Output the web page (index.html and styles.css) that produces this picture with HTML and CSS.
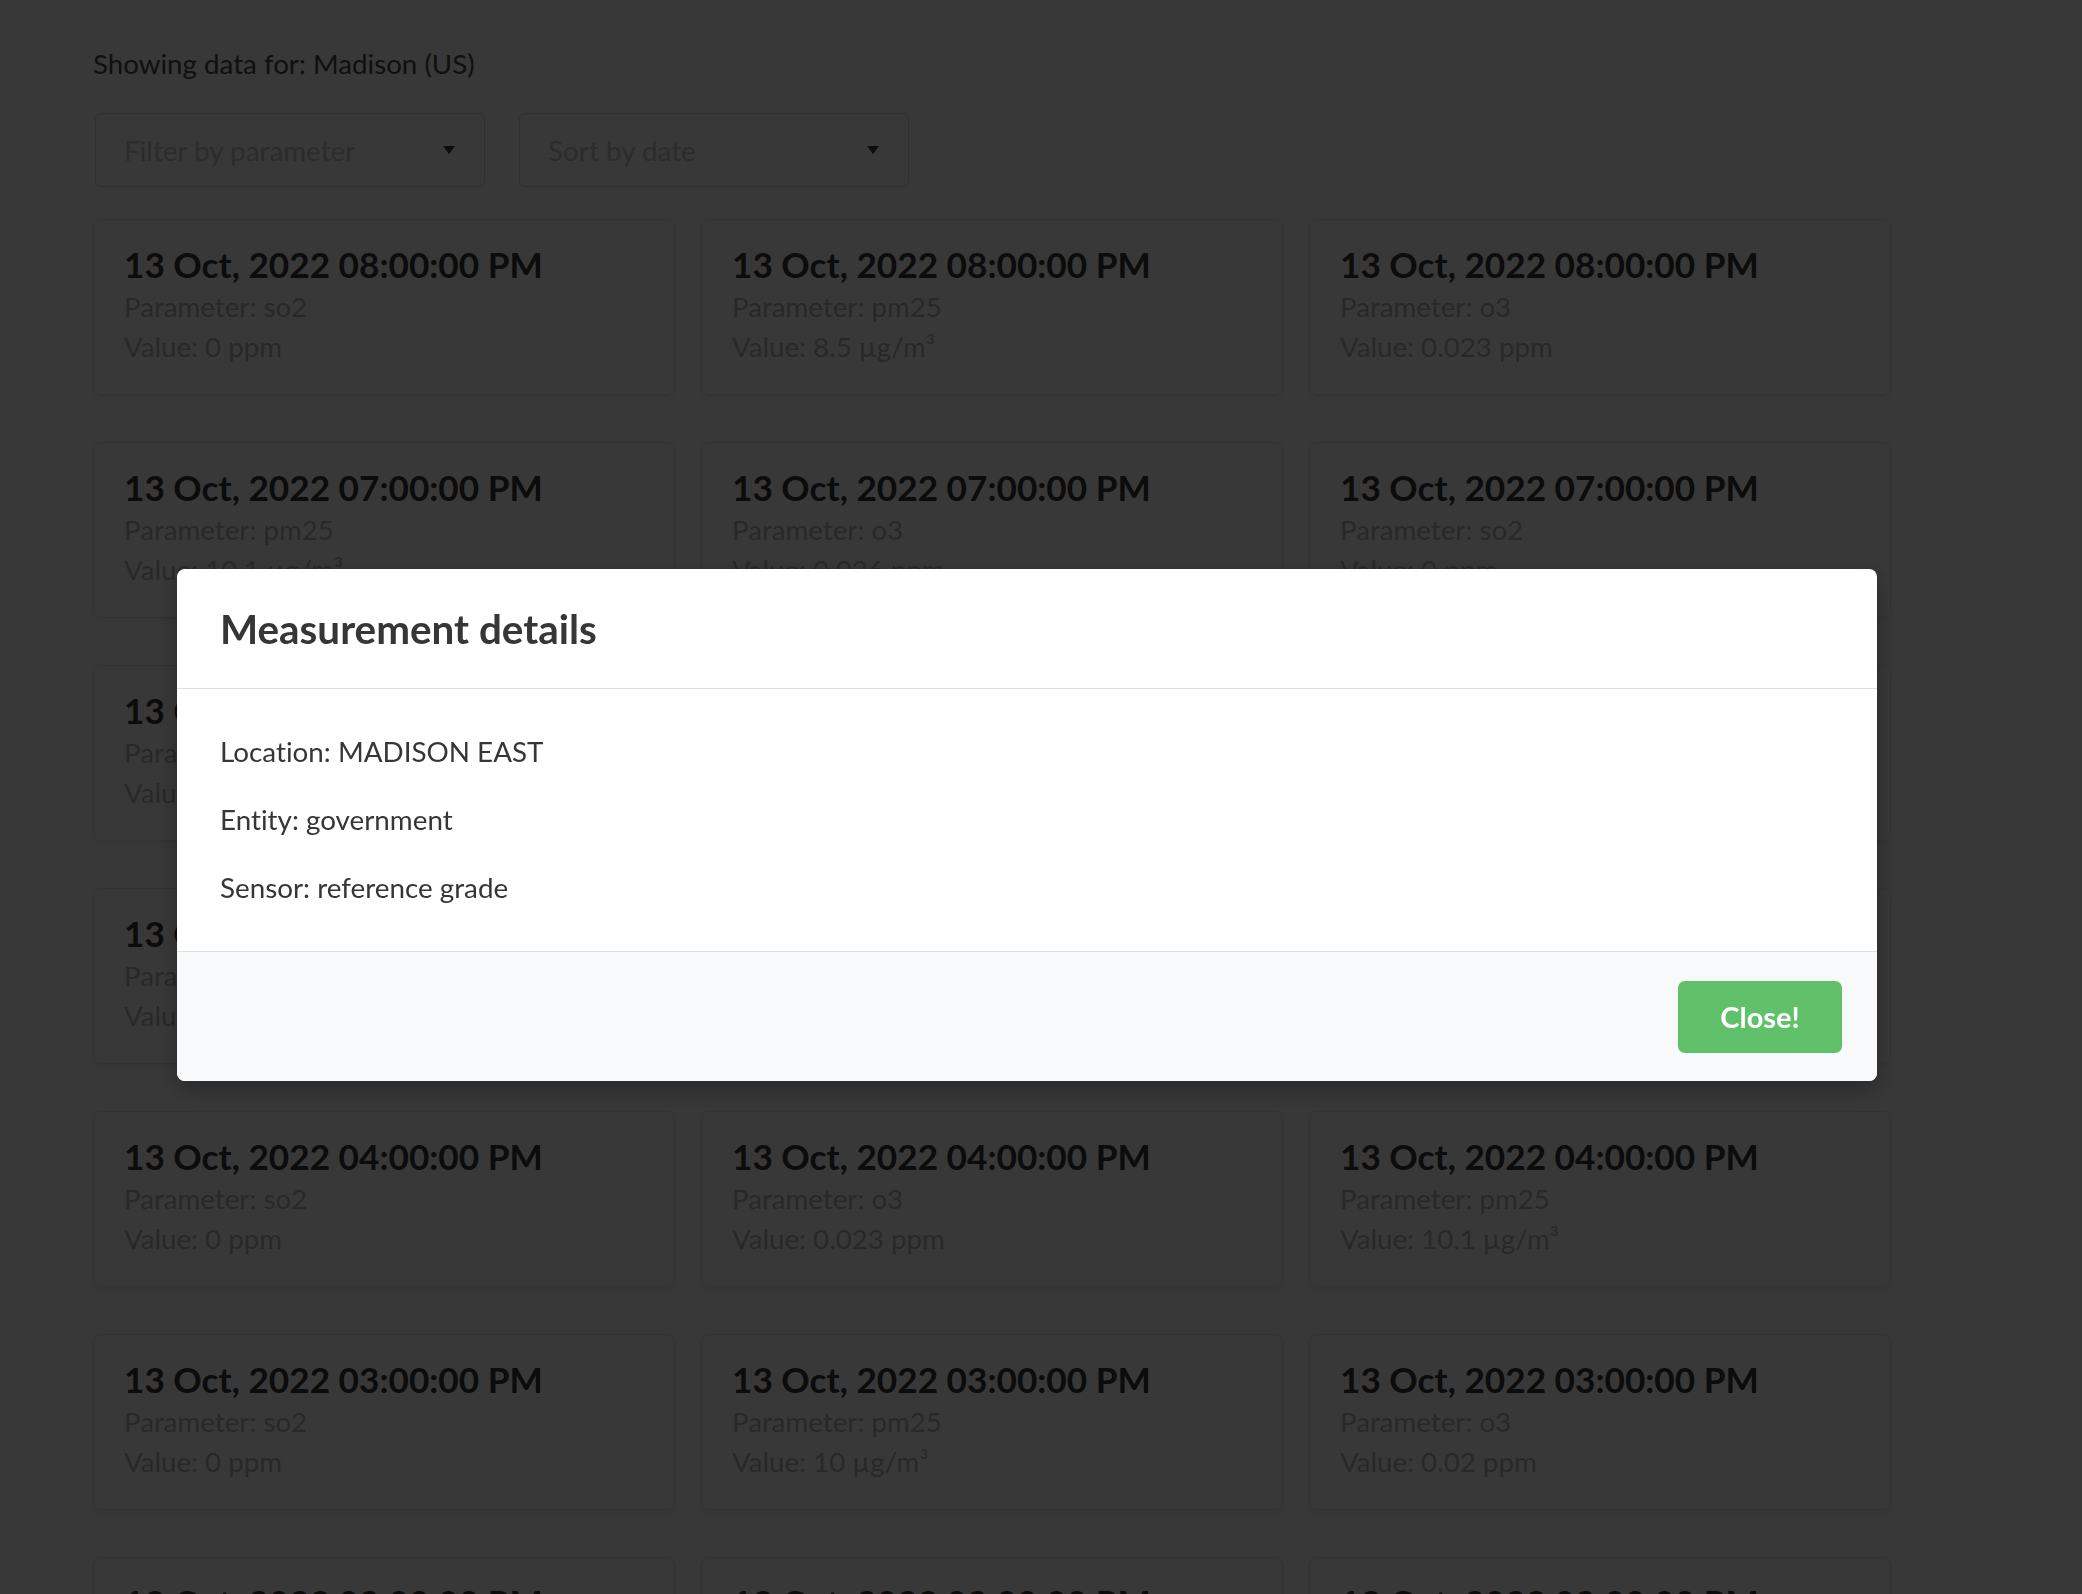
FILE: index.html
```html
<!DOCTYPE html>
<html lang="en">
<head>
<meta charset="utf-8">
<title>Measurements</title>
<link rel="stylesheet" href="styles.css">
</head>
<body>
<main class="page">
  <p class="location">Showing data for: Madison (US)</p>
  <div class="filters">
    <div class="select"><span class="placeholder">Filter by parameter</span><span class="caret"></span></div>
    <div class="select"><span class="placeholder">Sort by date</span><span class="caret"></span></div>
  </div>
  <div class="grid">
    <div class="card"><h3>13 Oct, 2022 08:00:00 PM</h3><p>Parameter: so2</p><p>Value: 0 ppm</p></div>
    <div class="card"><h3>13 Oct, 2022 08:00:00 PM</h3><p>Parameter: pm25</p><p>Value: 8.5 µg/m³</p></div>
    <div class="card"><h3>13 Oct, 2022 08:00:00 PM</h3><p>Parameter: o3</p><p>Value: 0.023 ppm</p></div>

    <div class="card"><h3>13 Oct, 2022 07:00:00 PM</h3><p>Parameter: pm25</p><p>Value: 10.1 µg/m³</p></div>
    <div class="card"><h3>13 Oct, 2022 07:00:00 PM</h3><p>Parameter: o3</p><p>Value: 0.026 ppm</p></div>
    <div class="card"><h3>13 Oct, 2022 07:00:00 PM</h3><p>Parameter: so2</p><p>Value: 0 ppm</p></div>

    <div class="card"><h3>13 Oct, 2022 06:00:00 PM</h3><p>Parameter: so2</p><p>Value: 0 ppm</p></div>
    <div class="card"><h3>13 Oct, 2022 06:00:00 PM</h3><p>Parameter: pm25</p><p>Value: 9.8 µg/m³</p></div>
    <div class="card"><h3>13 Oct, 2022 06:00:00 PM</h3><p>Parameter: o3</p><p>Value: 0.028 ppm</p></div>

    <div class="card"><h3>13 Oct, 2022 05:00:00 PM</h3><p>Parameter: pm25</p><p>Value: 10.4 µg/m³</p></div>
    <div class="card"><h3>13 Oct, 2022 05:00:00 PM</h3><p>Parameter: so2</p><p>Value: 0 ppm</p></div>
    <div class="card"><h3>13 Oct, 2022 05:00:00 PM</h3><p>Parameter: o3</p><p>Value: 0.025 ppm</p></div>

    <div class="card"><h3>13 Oct, 2022 04:00:00 PM</h3><p>Parameter: so2</p><p>Value: 0 ppm</p></div>
    <div class="card"><h3>13 Oct, 2022 04:00:00 PM</h3><p>Parameter: o3</p><p>Value: 0.023 ppm</p></div>
    <div class="card"><h3>13 Oct, 2022 04:00:00 PM</h3><p>Parameter: pm25</p><p>Value: 10.1 µg/m³</p></div>

    <div class="card"><h3>13 Oct, 2022 03:00:00 PM</h3><p>Parameter: so2</p><p>Value: 0 ppm</p></div>
    <div class="card"><h3>13 Oct, 2022 03:00:00 PM</h3><p>Parameter: pm25</p><p>Value: 10 µg/m³</p></div>
    <div class="card"><h3>13 Oct, 2022 03:00:00 PM</h3><p>Parameter: o3</p><p>Value: 0.02 ppm</p></div>

    <div class="card"><h3>13 Oct, 2022 02:00:00 PM</h3><p>Parameter: so2</p><p>Value: 0 ppm</p></div>
    <div class="card"><h3>13 Oct, 2022 02:00:00 PM</h3><p>Parameter: pm25</p><p>Value: 9.6 µg/m³</p></div>
    <div class="card"><h3>13 Oct, 2022 02:00:00 PM</h3><p>Parameter: o3</p><p>Value: 0.019 ppm</p></div>
  </div>
</main>

<div class="modal">
  <div class="modal-bg"></div>
  <div class="modal-card">
    <header class="modal-head"><p class="modal-title">Measurement details</p></header>
    <section class="modal-body">
      <p>Location: MADISON EAST</p>
      <p>Entity: government</p>
      <p>Sensor: reference grade</p>
    </section>
    <footer class="modal-foot"><button class="btn">Close!</button></footer>
  </div>
</div>
</body>
</html>
```
FILE: styles.css
```css
html, body {
  margin: 0;
  height: 1594px;
  overflow: hidden;
}
body {
  background: #ffffff;
  font-family: Lato, "Noto Sans", sans-serif;
  font-variant-ligatures: no-common-ligatures;
  color: #4a4a4a;
}
.page {
  width: 1798px;
  padding: 44px 0 0 93px;
}
.location {
  margin: 0;
  font-size: 27.7px;
  line-height: 40px;
  color: #4a4a4a;
}
.filters {
  display: flex;
  gap: 34px;
  margin: 29px 0 0 2px;
}
.select {
  width: 390px;
  height: 74px;
  box-sizing: border-box;
  border: 1px solid #dbdbdb;
  border-radius: 6px;
  background: #fff;
  display: flex;
  align-items: center;
  justify-content: space-between;
  padding: 0 29px 0 28px;
  font-size: 27.8px;
  color: #c6c6c6;
}
.caret {
  width: 0;
  height: 0;
  border-left: 6.5px solid transparent;
  border-right: 6.5px solid transparent;
  border-top: 8px solid #363636;
}
.grid {
  display: grid;
  grid-template-columns: repeat(3, 582px);
  column-gap: 26px;
  row-gap: 47px;
  margin-top: 32px;
}
.card {
  height: 176px;
  box-sizing: border-box;
  padding: 21px 30px 30px;
  background: #fff;
  border: 1px solid #e6e6e6;
  border-radius: 8px;
  box-shadow: 0 4px 8px rgba(10, 10, 10, 0.06);
}
.card h3 {
  margin: 0;
  font-size: 35.2px;
  line-height: 46px;
  font-weight: 700;
  color: #363636;
}
.card p {
  margin: 0;
  font-size: 27.7px;
  line-height: 40px;
  color: #b8b8b8;
}

.modal {
  position: fixed;
  inset: 0;
  z-index: 10;
  display: flex;
  align-items: flex-start;
  padding: 569px 0 0 177px;
  box-sizing: border-box;
}
.modal-bg {
  position: absolute;
  inset: 0;
  background: rgba(0, 0, 0, 0.78);
}
.modal-card {
  position: relative;
  width: 1700px;
  background: #fff;
  border-radius: 8px;
  overflow: hidden;
  box-shadow: 0 8px 24px rgba(0, 0, 0, 0.3);
}
.modal-head {
  padding: 39px 43px 39px;
  border-bottom: 1px solid #dfdfdf;
}
.modal-title {
  margin: 0;
  font-size: 40.4px;
  line-height: 41px;
  font-weight: 700;
  color: #363636;
}
.modal-body {
  padding: 43px 43px 42px;
}
.modal-body p {
  margin: 0 0 27.5px;
  font-size: 27.8px;
  line-height: 40.5px;
  color: #363636;
}
.modal-body p:last-child {
  margin-bottom: 0;
}
.modal-foot {
  display: flex;
  justify-content: flex-end;
  padding: 29px 35px 28px;
  background: #f8f9fa;
  border-top: 1px solid #dfdfdf;
}
.btn {
  width: 164px;
  height: 72px;
  border: none;
  border-radius: 7px;
  background: #61c06a;
  color: #fff;
  font-family: inherit;
  font-size: 29px;
  font-weight: 700;
}
```
